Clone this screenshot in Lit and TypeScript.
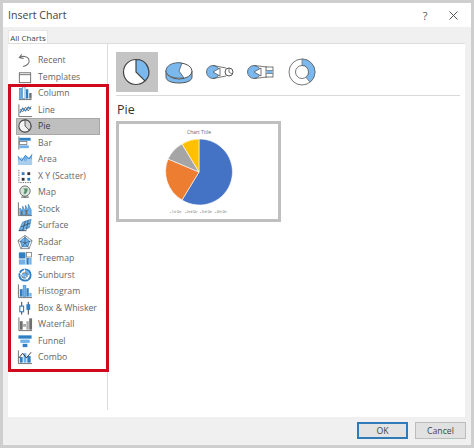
import { LitElement, html, svg, css } from "lit";
import { customElement } from "lit/decorators.js";

const G = "#6e6e6e";
const B = "#2f7fc4";
const L = "#6fb1e8";

const icons: Record<string, unknown> = {
  Recent: svg`<path d="M5 2 L2.500 5.500 L7 6.500 M3 5.500 C6 3.500 11 3.500 12.500 7 C14 11 11 14 6.500 15" fill="none" stroke="${G}" stroke-width="1.100"/>`,
  Templates: svg`<rect x="2.500" y="3.500" width="12" height="10.500" fill="#fff" stroke="${G}"/><path d="M2.500 5.500H14.500" stroke="${G}"/>`,
  Column: svg`<path d="M2 15H15.500" fill="none" stroke="${G}"/><rect x="2.500" y="3" width="2.500" height="11" fill="${L}" stroke="${B}" stroke-width=".6"/><rect x="6" y="1.500" width="2.500" height="12.500" fill="#fff" stroke="${B}" stroke-width=".7"/><rect x="9.500" y="4" width="2.500" height="10" fill="${B}"/><rect x="13" y="8" width="2.500" height="6" fill="${G}"/>`,
  Line: svg`<path d="M2 2V15H16" fill="none" stroke="${G}"/><path d="M3 11L6 6L9 9L12 5L15 7" fill="none" stroke="${B}" stroke-width="1.300"/><path d="M3 7L6 10L9 5L12 9L15 4" fill="none" stroke="${G}"/>`,
  Pie: svg`<circle cx="8.500" cy="8" r="6.500" fill="#f4f4f4" stroke="#444" stroke-width="1.100"/><path d="M8.500 1.500A6.500 6.500 0 0 1 13 12.500L8.500 8Z" fill="#d4d4d4" stroke="#444" stroke-width=".9"/>`,
  Bar: svg`<path d="M2 1V15" stroke="${G}"/><rect x="2.500" y="2.500" width="12" height="3" fill="${B}"/><rect x="2.500" y="6.500" width="8" height="3" fill="#fff" stroke="${G}" stroke-width=".8"/><rect x="2.500" y="10.500" width="10" height="3" fill="${L}"/>`,
  Area: svg`<path d="M1 14V5L5 10L9 4L13 8L16 3V14Z" fill="${L}"/><path d="M1 14V10L5 6L9 11L13 5L16 9V14Z" fill="#a9cdea"/><path d="M1 5L5 10L9 4L13 8L16 3" fill="none" stroke="${B}"/>`,
  "X Y (Scatter)": svg`<path d="M2 1.500V15H16" fill="none" stroke="${G}" stroke-dasharray="1.500 1"/><rect x="5" y="4" width="3" height="3" fill="${B}"/><rect x="11" y="4" width="3" height="3" fill="#333"/><rect x="5" y="10" width="3" height="3" fill="#333"/><rect x="11" y="10" width="3" height="3" fill="${B}"/>`,
  Map: svg`<circle cx="8.500" cy="7" r="5.500" fill="#d8e6dc" stroke="${G}"/><path d="M5 4.500C7 4 9 6 7.500 8S9 11 10 9 12 6 11 4" fill="#5c8f70"/><path d="M4.500 13.500H12.500M8.500 12.500V14.500" stroke="${G}" stroke-width="1.300"/>`,
  Stock: svg`<path d="M1.500 1V15H16" fill="none" stroke="${G}"/><path d="M3 14V7L6 10V5L9 11V4L12 10V3L15 9V14Z" fill="${L}" stroke="${B}" stroke-width=".7"/><path d="M4 14V10H6V14M9 14V9H11V14" fill="${G}"/>`,
  Surface: svg`<path d="M2 14L6 5L15 2L13 11Z" fill="${L}" stroke="${B}" stroke-width=".7"/><path d="M4 10L14 6M6 14L9 3.500M10 13L12 2.500" fill="none" stroke="#34495e" stroke-width=".8"/><path d="M2 14H10" stroke="#34495e"/>`,
  Radar: svg`<path d="M8.500 1L16 6.500L13 15H4L1 6.500Z" fill="#fff" stroke="${G}" stroke-width=".8"/><path d="M8.500 3L13.500 7L11.500 13H5.500L3.500 7Z" fill="${L}" stroke="${B}" stroke-width=".8"/><path d="M8.500 1V10M1 6.500L8.500 9L16 6.500M4 15L8.500 9L13 15" fill="none" stroke="#34495e" stroke-width=".6"/>`,
  Treemap: svg`<rect x="2" y="2" width="7" height="6.500" fill="${B}"/><rect x="2" y="9.500" width="7" height="5.500" fill="${L}"/><rect x="10" y="2" width="5.500" height="5" fill="#fff" stroke="${G}" stroke-width=".8"/><rect x="10" y="8" width="2.500" height="7" fill="${B}"/><rect x="13" y="8" width="2.500" height="7" fill="${L}"/>`,
  Sunburst: svg`<circle cx="8.500" cy="8" r="7" fill="${B}"/><circle cx="8.500" cy="8" r="5" fill="#fff"/><path d="M8.500 3A5 5 0 0 1 13.500 8H8.500Z" fill="${L}"/><circle cx="8" cy="8.500" r="3" fill="${L}" stroke="${G}" stroke-width=".8"/><path d="M2 5L7 9M8 1V5M11 13L9 9" stroke="#fff" stroke-width=".8"/>`,
  Histogram: svg`<path d="M1.500 1V15H16" fill="none" stroke="${G}"/><rect x="3" y="6" width="3" height="8" fill="${B}"/><rect x="6.500" y="2" width="3" height="12" fill="${L}" stroke="${B}" stroke-width=".5"/><rect x="10" y="5" width="2.500" height="9" fill="${B}"/><rect x="13" y="10" width="2.500" height="4" fill="${L}"/>`,
  "Box & Whisker": svg`<path d="M5 1.500V15M12 1.500V15" stroke="#333"/><rect x="3" y="6" width="4" height="6" fill="#fff" stroke="${B}" stroke-width="1.200"/><rect x="10" y="4" width="4" height="6" fill="${B}"/>`,
  Waterfall: svg`<path d="M2 1V15H16" fill="none" stroke="${G}"/><rect x="3" y="5" width="3" height="9" fill="${G}"/><rect x="6.500" y="8" width="3" height="3" fill="#aaa"/><rect x="10" y="5" width="2.500" height="9" fill="#aaa"/><rect x="13" y="2" width="3" height="12" fill="${G}"/>`,
  Funnel: svg`<rect x="1.500" y="2" width="14" height="3.500" fill="${B}"/><rect x="3.500" y="6.500" width="10" height="3.500" fill="${L}"/><rect x="6" y="11" width="5" height="3.500" fill="${B}"/>`,
  Combo: svg`<path d="M1.500 1V15H16" fill="none" stroke="${G}"/><rect x="3" y="8" width="3" height="6" fill="${B}"/><rect x="7" y="4" width="3" height="10" fill="${L}"/><rect x="11" y="7" width="3.500" height="7" fill="${B}"/><path d="M2 9L6 4L10 9L15 3" fill="none" stroke="#333"/>`,
};

const names = Object.keys(icons);

const ring = "#555";
const LB = "#7ab8ee";

@customElement("app-root")
export class AppRoot extends LitElement {
  static styles = css`
    :host { display: block; width: 474px; height: 448px; font-family: "Open Sans", "Noto Sans", sans-serif; }
    .frame { box-sizing: border-box; width: 474px; height: 448px; background: #cecece; padding: 3px; }
    .dialog { height: 442px; background: #f0f0f0; display: flex; flex-direction: column; position: relative; }
    .title { height: 24px; background: #fff; display: flex; align-items: center; padding: 0 5px; color: #444; font-size: 10.6px; flex: none; }
    .title span:first-child { flex: 1; }
    .help { font-size: 11px; color: #555; width: 34px; text-align: center; margin-right: 1px; }
    .close { width: 20px; height: 20px; display: flex; align-items: center; justify-content: center; margin-right: 3px; }
    .tabs { height: 16px; padding: 3px 0 0 5px; box-sizing: border-box; flex: none; display: flex; }
    .tab { background: #fff; width: 40px; height: 14px; font-size: 8px; color: #444; text-align: center; line-height: 13px; border: 1px solid #e6e6e6; border-bottom: 0; box-sizing: border-box; }
    .panel { margin: 0 6px 0 5px; height: 374px; background: #fff; border-top: 1px solid #dedede; box-sizing: border-box; display: flex; flex: none; }
    .side { width: 100px; flex: none; box-sizing: border-box; padding: 8px 0 0 8px; height: 366px; border-right: 1px solid #dcdcdc; }
    .row { width: 84px; height: 16.5px; display: flex; align-items: center; gap: 5px; padding-left: 1px; box-sizing: border-box; font-size: 8.7px; color: #666; white-space: nowrap; }
    .row.sel { background: #bfbfbf; border: 1px solid #a8a8a8; padding-left: 0; color: #3c3c3c; }
    .row svg { width: 16px; height: 16px; flex: none; }
    .main { flex: 1; padding: 8px 5px 0 8px; box-sizing: border-box; }
    .types { display: flex; height: 44px; border-bottom: 1px solid #d9d9d9; box-sizing: border-box; }
    .type { width: 41.5px; height: 40px; flex: none; }
    .type svg { width: 41px; height: 40px; display: block; }
    .type.sel { background: #c4c4c4; }
    .heading { font-size: 12.5px; color: #333; margin: 5px 0 0 1px; height: 20px; line-height: 17px; }
    .preview { box-sizing: border-box; width: 165px; height: 101px; border: 3px solid #bfbfbf; background: #fff; }
    .preview svg { display: block; width: 159px; height: 95px; }
    .preview text { font-family: "Open Sans", sans-serif; fill: #666; }
    .foot { flex: 1; display: flex; justify-content: flex-end; gap: 7px; padding: 5px 5px 0 0; }
    .btn { width: 51px; height: 17px; box-sizing: border-box; background: #e1e1e1; border: 1px solid #bcbcbc; font-size: 8.7px; color: #444; display: flex; align-items: center; justify-content: center; }
    .btn.ok { border: 2px solid #2f7ab8; background: #e3e3e3; }
    .red { position: absolute; left: 5px; top: 81px; width: 101px; height: 288px; box-sizing: border-box; border: 3px solid #cf0a1c; pointer-events: none; }
  `;

  render() {
    return html`
      <div class="frame">
        <div class="dialog">
          <div class="title">
            <span>Insert Chart</span>
            <span class="help">?</span>
            <span class="close"><svg width="9" height="9" viewBox="0 0 9 9"><path d="M.5.5L8.5 8.5M8.5.5L.5 8.5" stroke="#555" stroke-width="1"/></svg></span>
          </div>
          <div class="tabs"><div class="tab">All Charts</div></div>
          <div class="panel">
            <div class="side">
              ${names.map(
                (n) => html`<div class="row ${n === "Pie" ? "sel" : ""}"><svg viewBox="0 0 17 16">${icons[n]}</svg><span>${n}</span></div>`
              )}
            </div>
            <div class="main">
              <div class="types">
                <div class="type sel"><svg viewBox="0 0 41 40"><circle cx="20" cy="20" r="12.500" fill="#fff" stroke="#444" stroke-width="1.200"/><path d="M20 7.500A12.500 12.500 0 0 1 29 29L20 20Z" fill="${LB}" stroke="#444" stroke-width="1.200"/></svg></div>
                <div class="type"><svg viewBox="0 0 41 40"><path d="M8 19V25C8 29 14 31 21 31S34 29 34 25V19" fill="${LB}" stroke="${ring}"/><ellipse cx="21" cy="19" rx="13" ry="8" fill="#fff" stroke="${ring}"/><path d="M21 19L24 11C14 9.500 8 14 8 19C8 23 14 27 26 26Z" fill="${LB}" stroke="${ring}" stroke-width=".8"/></svg></div>
                <div class="type"><svg viewBox="0 0 41 40"><circle cx="14" cy="20" r="6.500" fill="${LB}" stroke="${ring}" stroke-width=".8"/><path d="M14 20L21 16V24Z" fill="#fff" stroke="${ring}" stroke-width=".8"/><path d="M14 13.500L27 16M14 26.500L27 24" stroke="${ring}" stroke-width=".8"/><circle cx="30" cy="20" r="4" fill="#fff" stroke="${ring}"/><path d="M30 16V20L33 22" fill="none" stroke="${ring}" stroke-width=".8"/></svg></div>
                <div class="type"><svg viewBox="0 0 41 40"><circle cx="13" cy="20" r="6.500" fill="${LB}" stroke="${ring}" stroke-width=".8"/><path d="M13 20L20 16V24Z" fill="#fff" stroke="${ring}" stroke-width=".8"/><path d="M13 13.500L26 15M13 26.500L26 25" stroke="${ring}" stroke-width=".8"/><rect x="25" y="15" width="7" height="10" fill="#fff" stroke="${ring}" stroke-width=".8"/><rect x="25.500" y="18.500" width="6" height="3" fill="${LB}"/><path d="M25 18.500H32M25 21.500H32" stroke="${ring}" stroke-width=".6"/></svg></div>
                <div class="type"><svg viewBox="0 0 41 40"><circle cx="20" cy="20" r="13" fill="#fff" stroke="${ring}" stroke-width=".8"/><path d="M20 7A13 13 0 0 1 28 30.200L23.800 25.200A6.500 6.500 0 0 0 20 13.500Z" fill="${LB}" stroke="${ring}" stroke-width=".6"/><circle cx="20" cy="20" r="6.500" fill="#fff" stroke="${ring}" stroke-width=".8"/></svg></div>
              </div>
              <div class="heading">Pie</div>
              <div class="preview">
                <svg viewBox="0 0 159 95">
                  <text x="80" y="9.500" font-size="5" text-anchor="middle">Chart Title</text>
                  <g stroke="#fff" stroke-width=".6" transform="translate(-119 -124)">
                    <path d="M199 172V139A33 33 0 1 1 182 200Z" fill="#4472c4"/>
                    <path d="M199 172L182 200A33 33 0 0 1 168 159Z" fill="#ed7d31"/>
                    <path d="M199 172L168 159A33 33 0 0 1 182 144Z" fill="#a5a5a5"/>
                    <path d="M199 172L182 144A33 33 0 0 1 199 139Z" fill="#ffc000"/>
                  </g>
                  <g font-size="3">
                    <text x="51" y="89">▪ 1st Qtr</text>
                    <text x="66" y="89">▪ 2nd Qtr</text>
                    <text x="81" y="89">▪ 3rd Qtr</text>
                    <text x="96" y="89">▪ 4th Qtr</text>
                  </g>
                </svg>
              </div>
            </div>
          </div>
          <div class="foot">
            <div class="btn ok">OK</div>
            <div class="btn">Cancel</div>
          </div>
          <div class="red"></div>
        </div>
      </div>
    `;
  }
}
